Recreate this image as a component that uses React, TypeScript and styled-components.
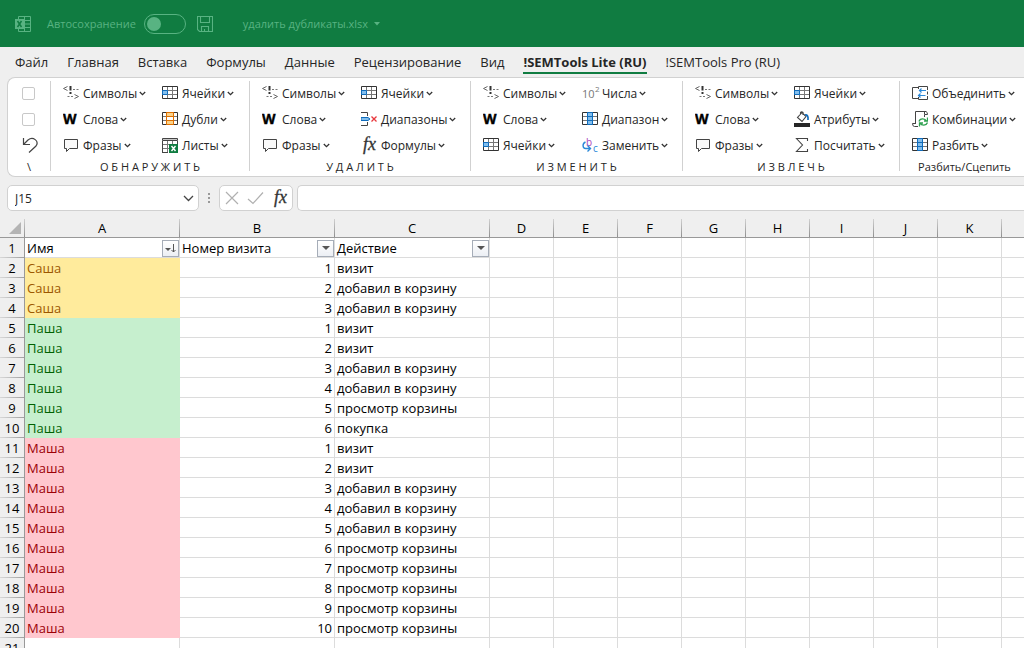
import React from "react";
import styled, { createGlobalStyle } from "styled-components";

const GlobalStyle = createGlobalStyle`
  * { box-sizing: border-box; }
  body { margin: 0; background: #efefef; }
  body, button, input { font-family: "Open Sans", "Noto Sans", sans-serif; color: #262626; }
  button { border: 0; padding: 0; background: none; font-size: 12px; }
  svg { display: block; flex: none; }
`;

const Window = styled.div`
  height: 100vh;
  overflow: hidden;
  display: flex;
  flex-direction: column;
`;

/* ---------- title bar ---------- */
const TitleBar = styled.header`
  flex: none;
  height: 47px;
  display: flex;
  align-items: center;
  padding: 0 15px;
  background: #107c41;
  color: #58b382;
  font-size: 11px;
`;
const AutoSave = styled.label`
  display: flex;
  align-items: center;
  gap: 8px;
  margin: 0 11px 0 16px;
  white-space: nowrap;
`;
const Switch = styled.input`
  appearance: none;
  width: 42px;
  height: 20px;
  margin: 0;
  padding: 2px;
  border: 1px solid #58b382;
  border-radius: 10px;
  &::before {
    content: "";
    display: block;
    width: 14px;
    height: 14px;
    border-radius: 50%;
    background: #58b382;
  }
  &:checked::before { margin-left: 22px; }
`;
const FileName = styled.button`
  display: flex;
  align-items: center;
  gap: 6px;
  margin-left: 30px;
  color: #58b382;
  font-size: 11px;
`;

/* ---------- tabs ---------- */
const Tabs = styled.nav`
  flex: none;
  height: 30px;
  display: flex;
  gap: 19px;
  padding: 5px 15px 0;
`;
const Tab = styled.a<{ $active?: boolean }>`
  height: 22px;
  line-height: 20px;
  font-size: 13px;
  font-weight: ${(p) => (p.$active ? 700 : 400)};
  color: #262626;
  text-decoration: none;
  white-space: nowrap;
  border-bottom: 2px solid ${(p) => (p.$active ? "#107c41" : "transparent")};
`;

/* ---------- ribbon ---------- */
const Ribbon = styled.section`
  flex: none;
  height: 100px;
  margin-left: 7px;
  padding: 3px 0 5px;
  display: flex;
  overflow: hidden;
  background: #fff;
  border: 1px solid #d1d1d1;
  border-right: 0;
  border-radius: 8px 0 0 8px;
`;
const Group = styled.div<{ $width: number }>`
  flex: none;
  width: ${(p) => p.$width}px;
  display: flex;
  flex-direction: column;
  border-right: 1px solid #d1d1d1;
  &:last-child { border-right: 0; flex: 1 0 auto; }
`;
const Commands = styled.div`
  display: grid;
  grid-template-rows: repeat(3, 26px);
  grid-template-columns: 99px 1fr;
  grid-auto-flow: column;
  margin-top: -1px;
  padding-left: 12px;
`;
const QuickCommands = styled(Commands)`
  grid-template-columns: 1fr;
  padding-left: 14px;
  align-items: center;
`;
const Caption = styled.div`
  height: 14px;
  line-height: 18px;
  font-size: 11px;
  text-align: center;
  white-space: nowrap;
`;
const Command = styled.button`
  display: flex;
  align-items: center;
  white-space: nowrap;
`;
const CommandIcon = styled.span`
  width: 20px;
  flex: none;
`;
const CommandChevron = styled.span`
  margin-left: 2px;
`;
const Tick = styled.input`
  appearance: none;
  width: 13px;
  height: 13px;
  margin: 0;
  border: 1px solid #c8c8c8;
  border-radius: 2px;
  background: #fff;
`;

/* ---------- formula bar ---------- */
const FormulaBar = styled.div`
  flex: none;
  height: 41px;
  display: flex;
  align-items: flex-start;
  padding: 8px 0 0 7px;
`;
const Field = styled.div<{ $width: number }>`
  flex: none;
  width: ${(p) => p.$width}px;
  height: 26px;
  display: flex;
  align-items: center;
  justify-content: space-between;
  padding: 0 4px 0 5px;
  background: #fff;
  border: 1px solid #d1d1d1;
  border-radius: 5px;
`;
const NameInput = styled.input`
  flex: 1;
  min-width: 0;
  border: 0;
  padding: 0 2px;
  outline: 0;
  background: none;
  font-size: 12px;
`;
const Grip = styled.span`
  width: 20px;
  height: 26px;
  display: flex;
  align-items: center;
  justify-content: center;
`;
const FormulaInput = styled.input`
  flex: 1;
  min-width: 0;
  height: 26px;
  margin-left: 4px;
  padding: 0 6px;
  border: 1px solid #d1d1d1;
  border-right: 0;
  border-radius: 5px 0 0 5px;
  background: #fff;
  outline: 0;
  font-size: 12px;
`;

/* ---------- sheet ---------- */
const Sheet = styled.table`
  width: 100%;
  table-layout: fixed;
  border-collapse: separate;
  border-spacing: 0;
  background: #fff;
  color: #000;
  font-size: 13px;
  line-height: 18px;
`;
const ColumnHead = styled.th`
  height: 20px;
  padding: 0 1px 0 0;
  font-weight: 400;
  border-bottom: 1px solid #999;
  background: linear-gradient(#d0d0d0, #909090) right bottom / 1px 18px no-repeat, #efefef;
  &:last-child { background: #efefef; }
`;
const Corner = styled(ColumnHead)`
  padding: 0 4px 3px 0;
  vertical-align: bottom;
  svg { margin-left: auto; }
`;
const RowHead = styled.th`
  height: 20px;
  padding: 0;
  font-weight: 400;
  text-align: center;
  border-right: 1px solid #999;
  background: linear-gradient(90deg, #d8d8d8, #a0a0a0) left bottom / 100% 1px no-repeat, #efefef;
`;
const tones = {
  plain: ["#fff", "#000", "#dcdcdc"],
  yellow: ["#ffeb9c", "#9c5700", "#ffeb9c"],
  green: ["#c6efce", "#006100", "#c6efce"],
  red: ["#ffc7ce", "#9c0006", "#ffc7ce"],
};
type Tone = keyof typeof tones;
const Cell = styled.td<{ $tone?: Tone; $number?: boolean }>`
  height: 20px;
  padding: 1px 2px 0;
  white-space: nowrap;
  overflow: hidden;
  text-align: ${(p) => (p.$number ? "right" : "left")};
  background: ${(p) => tones[p.$tone ?? "plain"][0]};
  color: ${(p) => tones[p.$tone ?? "plain"][1]};
  border: 0 solid ${(p) => tones[p.$tone ?? "plain"][2]};
  border-width: 0 1px 1px 0;
  &:last-child { border-right-width: 0; }
`;
const FilterCell = styled.div`
  display: flex;
  justify-content: space-between;
  align-items: center;
  margin-right: -2px;
`;
const FilterButton = styled.button`
  width: 17px;
  height: 17px;
  display: grid;
  place-items: center;
  border: 1px solid #a6adb8;
  background: linear-gradient(#fff, #eceff4);
`;

/* ---------- icons ---------- */
const Svg = ({ w = 16, h = 16, children }: { w?: number; h?: number; children: React.ReactNode }) => (
  <svg width={w} height={h} viewBox={`0 0 ${w} ${h}`} fill="none" aria-hidden="true">
    {children}
  </svg>
);
const Chevron = () => (
  <Svg w={7} h={5}><path d="M.8 1 3.5 3.6 6.2 1" stroke="#333" strokeWidth="1.3" /></Svg>
);
const SymbolsIcon = () => (
  <Svg>
    <path d="M4.500 1.500.5 3.500l4 2M11.500 9.500l4 2-4 2" stroke="#666" />
    <path d="M7.500 1v4.500M7.500 7v2" stroke="#333" strokeWidth="2" />
    <path d="M10 4.500h2M13.500 4.500h2M4.500 11.500h2M8 11.500h2" stroke="#777" />
  </Svg>
);
const WordsIcon = () => (
  <Svg h={20}>
    <text x="0" y="15" fontSize="14" fontWeight="700" fill="#000" stroke="#000" strokeWidth=".4" fontFamily="Open Sans">W</text>
  </Svg>
);
const PhraseIcon = () => (
  <Svg><path d="M1.500 2.500h13v9h-8l-3 3v-3h-2z" stroke="#444" fill="#fafafa" /></Svg>
);
const CellsIcon = () => (
  <Svg>
    <path d="M5.500 1v13M10.500 1v13M0 5.500h16M0 9.500h16" stroke="#777" />
    <path d="M.5 1.500h15v12H.5z" stroke="#333" />
    <path d="M.5 5.500h5v4h-5z" fill="#83beec" stroke="#0f6cbd" />
  </Svg>
);
const ColumnIcon = () => (
  <Svg>
    <path d="M0 5.500h16M0 9.500h16" stroke="#777" />
    <path d="M.5 1.500h15v12H.5z" stroke="#333" />
    <path d="M5.500 1.500h5v12h-5z" fill="#83beec" stroke="#0f6cbd" />
    <path d="M5.500 5.500h5M5.500 9.500h5" stroke="#0f6cbd" />
  </Svg>
);
const DuplicatesIcon = () => (
  <Svg>
    <path d="M0 5.500h16M0 9.500h16" stroke="#777" />
    <path d="M.5 1.500h15v12H.5z" stroke="#333" />
    <path d="M4.500 1.500h7v4h-7zM4.500 9.500h7v4h-7z" fill="#fbd38b" stroke="#e07000" />
    <path d="M4.500 5v5M11.500 5v5" stroke="#e07000" />
  </Svg>
);
const SheetsIcon = () => (
  <Svg>
    <path d="M5.500 4v11M10.500 4v4M0 7.500h7M0 11.500h7" stroke="#777" />
    <path d="M.5 1.500h15v2H.5z" fill="#c8c8c8" stroke="#444" />
    <path d="M.5 4v11.500M0 15.500h6M15.500 4v3" stroke="#444" />
    <path d="M7 7h9v9H7z" fill="#107c41" />
    <path d="m9.500 9 4 5M13.500 9l-4 5" stroke="#fff" strokeWidth="1.400" />
  </Svg>
);
const RangesIcon = () => (
  <Svg>
    <path d="M0 1.500h6.500V5M0 14.500h6.500V11" stroke="#444" />
    <path d="M0 6.500h7l2 1.500-2 1.500H0z" fill="#83beec" stroke="#0f6cbd" />
    <path d="m10.500 5.500 5 5M15.500 5.500l-5 5" stroke="#e8383d" strokeWidth="1.300" />
  </Svg>
);
const FxIcon = () => (
  <Svg h={20}>
    <text x="2" y="15" fontSize="18" fontStyle="italic" fill="#333" stroke="#333" strokeWidth=".3" fontFamily="Liberation Serif">fx</text>
  </Svg>
);
const TenIcon = () => (
  <Svg w={18} h={20}>
    <text x="0" y="15" fontSize="11" fill="#777" fontFamily="Open Sans">10</text>
    <text x="13" y="9" fontSize="8" fill="#777" fontFamily="Open Sans">2</text>
  </Svg>
);
const ReplaceIcon = () => (
  <Svg w={18} h={20}>
    <text x="4" y="11" fontSize="10" fill="#a846b9" fontFamily="Open Sans">b</text>
    <text x="11" y="17" fontSize="10" fill="#2b88d8" fontFamily="Open Sans">c</text>
    <path d="M3.500 7C0 8.500.5 13.500 3.500 13.500H8M5.500 10.500l3 3-3 3" stroke="#2b88d8" strokeWidth="1.400" />
  </Svg>
);
const FillIcon = () => (
  <Svg>
    <path d="M0 12h16v4H0z" fill="#262626" />
    <path d="M8 1.500 3.500 6.500 8 10.500l4-5zM6.500 3.500V1.500Q7.500 0 9 1.500V4" stroke="#444" strokeWidth="1.100" />
    <path d="M11 4c2-.5 3.500 1 3 5" stroke="#0f6cbd" strokeWidth="1.700" />
  </Svg>
);
const SumIcon = () => (
  <Svg><path d="M13.500 4V1.500h-11L8.500 8l-6 6.500h11V12" stroke="#444" strokeWidth="1.100" /></Svg>
);
const MergeIcon = () => (
  <Svg>
    <path d="M6 2.500H.5v11H6M6.500 4V1.500h9V5M6.500 12v2.500h9V11M15.500 6.500v3" stroke="#444" />
    <path d="M14 5.500H7.500M9.500 3.500l-2 2 2 2M6.500 10.500h7M8.500 8.500l-2 2 2 2" stroke="#2b88d8" strokeWidth="1.200" />
  </Svg>
);
const CombineIcon = () => (
  <Svg>
    <path d="M3.500 13V.5h10.500q1.500.5 1.500 3h-3M12.500 3.500V1M3.500 12.500H.5q0 3 2 3H6M12.500 4v2" stroke="#444" />
    <path d="M7 10.500c1-3.500 6-3.500 7.500-.5M15.500 6.500V10H12M15.500 11.500c-1 3.500-6 3.500-7.500.5M7.500 15.500V12H11" stroke="#2ea04f" strokeWidth="1.300" />
  </Svg>
);
const UndoIcon = () => (
  <Svg>
    <path d="M1.500 1v6.500H8M1.500 7.500 6 3c5-4 11.500 1 8 6l-7 6.500" stroke="#444" strokeWidth="1.200" />
  </Svg>
);
const ExcelIcon = () => (
  <Svg>
    <path d="M3.500 4V.5h12v15h-12V12M9.500 1v14M3.500 4.500h12M8 8h8M3.500 11.500h12" stroke="#58b382" />
    <path d="M0 3h9v10H0z" fill="#58b382" />
    <path d="m2.500 5 4 6M6.500 5l-4 6" stroke="#107c41" strokeWidth="1.500" />
  </Svg>
);
const SaveIcon = () => (
  <Svg>
    <path d="M.5.500h15v15h-13l-2-2zM3.500.500v6h9v-6M4.500 15.500v-5h7v5M7.500 13v2.500" stroke="#58b382" strokeWidth="1.100" />
  </Svg>
);

/* ---------- data ---------- */
const tabs = ["Файл", "Главная", "Вставка", "Формулы", "Данные", "Рецензирование", "Вид", "!SEMTools Lite (RU)", "!SEMTools Pro (RU)"];

type Item = [React.FC, string];
const symbols: Item = [SymbolsIcon, "Символы"];
const words: Item = [WordsIcon, "Слова"];
const phrases: Item = [PhraseIcon, "Фразы"];
const cells: Item = [CellsIcon, "Ячейки"];
const groups: { caption: string; width: number; items: Item[] }[] = [
  { caption: "О Б Н А Р У Ж И Т Ь", width: 199, items: [symbols, words, phrases, cells, [DuplicatesIcon, "Дубли"], [SheetsIcon, "Листы"]] },
  { caption: "У Д А Л И Т Ь", width: 221, items: [symbols, words, phrases, cells, [RangesIcon, "Диапазоны"], [FxIcon, "Формулы"]] },
  { caption: "И З М Е Н И Т Ь", width: 212, items: [symbols, words, cells, [TenIcon, "Числа"], [ColumnIcon, "Диапазон"], [ReplaceIcon, "Заменить"]] },
  { caption: "И З В Л Е Ч Ь", width: 217, items: [symbols, words, phrases, cells, [FillIcon, "Атрибуты"], [SumIcon, "Посчитать"]] },
  { caption: "Разбить/Сцепить", width: 129, items: [[MergeIcon, "Объединить"], [CombineIcon, "Комбинации"], [ColumnIcon, "Разбить"]] },
];

const columns = ["A", "B", "C", "D", "E", "F", "G", "H", "I", "J", "K", ""];
const visits: { name: string; tone: Tone; actions: string[] }[] = [
  { name: "Саша", tone: "yellow", actions: ["визит", "добавил в корзину", "добавил в корзину"] },
  { name: "Паша", tone: "green", actions: ["визит", "визит", "добавил в корзину", "добавил в корзину", "просмотр корзины", "покупка"] },
  {
    name: "Маша",
    tone: "red",
    actions: ["визит", "визит", "добавил в корзину", "добавил в корзину", "добавил в корзину", "просмотр корзины", "просмотр корзины", "просмотр корзины", "просмотр корзины", "просмотр корзины"],
  },
];
const rows = visits.flatMap((v) => v.actions.map((action, i) => ({ name: v.name, tone: v.tone, visit: i + 1, action })));
const headings = ["Имя", "Номер визита", "Действие"];
const emptyCells = (from: number) => columns.slice(from).map((c) => <Cell key={c} />);

export default function App() {
  return (
    <Window>
      <GlobalStyle />
      <TitleBar>
        <ExcelIcon />
        <AutoSave>
          Автосохранение
          <Switch type="checkbox" role="switch" />
        </AutoSave>
        <button aria-label="Сохранить"><SaveIcon /></button>
        <FileName>
          удалить дубликаты.xlsx
          <Svg w={6} h={4}><path d="M0 0h6L3 3.500z" fill="#58b382" /></Svg>
        </FileName>
      </TitleBar>
      <Tabs>
        {tabs.map((t) => (
          <Tab key={t} href="#" $active={t.includes("Lite")}>{t}</Tab>
        ))}
      </Tabs>
      <Ribbon>
        <Group $width={43}>
          <QuickCommands>
            <Tick type="checkbox" aria-label="Параметр 1" />
            <Tick type="checkbox" aria-label="Параметр 2" />
            <button aria-label="Отменить"><UndoIcon /></button>
          </QuickCommands>
          <Caption>\</Caption>
        </Group>
        {groups.map((g) => (
          <Group key={g.caption} $width={g.width}>
            <Commands>
              {g.items.map(([Icon, label]) => (
                <Command key={label}>
                  <CommandIcon><Icon /></CommandIcon>
                  {label}
                  <CommandChevron><Chevron /></CommandChevron>
                </Command>
              ))}
            </Commands>
            <Caption>{g.caption}</Caption>
          </Group>
        ))}
      </Ribbon>
      <FormulaBar>
        <Field $width={192}>
          <NameInput aria-label="Имя ячейки" defaultValue="J15" />
          <button aria-label="Список имён">
            <Svg w={11} h={7}><path d="m1 1 4.500 4.500L10 1" stroke="#444" strokeWidth="1.300" /></Svg>
          </button>
        </Field>
        <Grip>
          <Svg w={2} h={11}><path d="M0 0h2v2H0zM0 4h2v2H0zM0 8h2v2H0z" fill="#999" /></Svg>
        </Grip>
        <Field $width={74}>
          <button aria-label="Отмена">
            <Svg w={14} h={14}><path d="m1 1 12 12M13 1 1 13" stroke="#b0b0b0" strokeWidth="1.200" /></Svg>
          </button>
          <button aria-label="Ввод">
            <Svg w={17} h={14}><path d="m1 8 5 4.500L16 1.500" stroke="#b0b0b0" strokeWidth="1.200" /></Svg>
          </button>
          <button aria-label="Вставить функцию"><FxIcon /></button>
        </Field>
        <FormulaInput aria-label="Строка формул" />
      </FormulaBar>
      <Sheet>
        <colgroup>
          <col style={{ width: 25 }} />
          {columns.map((c, i) => (
            <col key={c} style={{ width: i < 3 ? 155 : c ? 64 : undefined }} />
          ))}
        </colgroup>
        <thead>
          <tr>
            <Corner>
              <Svg w={12} h={12}><path d="M12 0v12H0z" fill="#b4b4b4" /></Svg>
            </Corner>
            {columns.map((c) => <ColumnHead key={c}>{c}</ColumnHead>)}
          </tr>
        </thead>
        <tbody>
          <tr>
            <RowHead>1</RowHead>
            {headings.map((h, i) => (
              <Cell key={h}>
                <FilterCell>
                  {h}
                  <FilterButton aria-label={`Фильтр: ${h}`}>
                    {i === 0 ? (
                      <Svg w={11} h={11}>
                        <path d="M0 5h6L3 8z" fill="#555" />
                        <path d="M8.500 1v8M6.500 7l2 2 2-2" stroke="#555" />
                      </Svg>
                    ) : (
                      <Svg w={8} h={4}><path d="M0 0h8L4 4z" fill="#555" /></Svg>
                    )}
                  </FilterButton>
                </FilterCell>
              </Cell>
            ))}
            {emptyCells(3)}
          </tr>
          {rows.map((r, i) => (
            <tr key={i}>
              <RowHead>{i + 2}</RowHead>
              <Cell $tone={r.tone}>{r.name}</Cell>
              <Cell $number>{r.visit}</Cell>
              <Cell>{r.action}</Cell>
              {emptyCells(3)}
            </tr>
          ))}
          <tr>
            <RowHead>21</RowHead>
            {emptyCells(0)}
          </tr>
        </tbody>
      </Sheet>
    </Window>
  );
}
